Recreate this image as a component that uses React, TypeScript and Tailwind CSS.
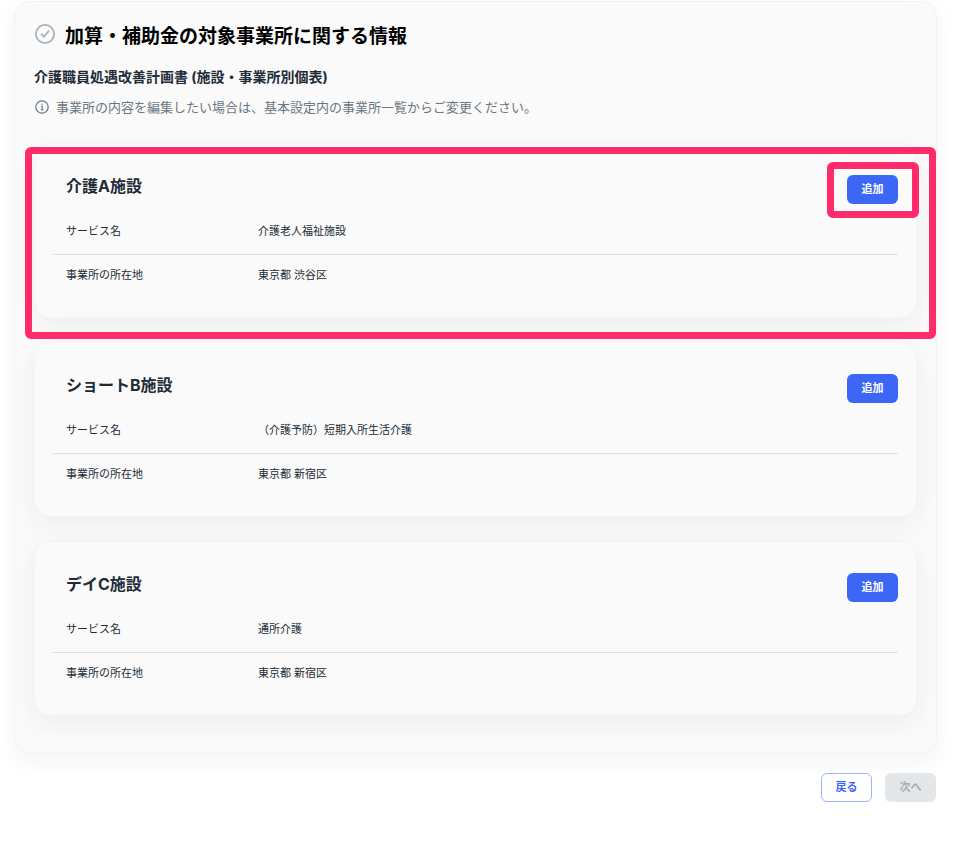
import React from "react";

type Facility = {
  name: string;
  service: string;
  address: string;
  highlighted?: boolean;
};

const facilities: Facility[] = [
  { name: "介護A施設", service: "介護老人福祉施設", address: "東京都 渋谷区", highlighted: true },
  { name: "ショートB施設", service: "（介護予防）短期入所生活介護", address: "東京都 新宿区" },
  { name: "デイC施設", service: "通所介護", address: "東京都 新宿区" },
];

function CheckCircle() {
  return (
    <svg className="mt-1 size-5 shrink-0" viewBox="0 0 20 20" fill="none" stroke="#a9b3bc" strokeWidth="1.8" aria-hidden="true">
      <circle cx="10" cy="10" r="9.1" />
      <path d="M6 9.6 9 12.6 14 6.7" />
    </svg>
  );
}

function InfoCircle() {
  return (
    <svg className="size-3.5 shrink-0" viewBox="0 0 14 14" fill="none" stroke="#6b7780" strokeWidth="1.2" aria-hidden="true">
      <circle cx="7" cy="7" r="6.2" />
      <path d="M6 6.2H7.2V9.8M5.8 9.8H8.6" strokeWidth="1.1" />
      <circle cx="7" cy="4.2" r="0.7" fill="#6b7780" stroke="none" />
    </svg>
  );
}

function FacilityCard({ facility }: { facility: Facility }) {
  return (
    <section className="relative rounded-2xl border border-[#f2f3f4] bg-[#fafafa] px-[18px] pt-[31px] pb-[21px] shadow-[0_8px_24px_rgba(30,45,75,0.06)]">
      <div className="flex h-[33px] items-start justify-between pl-[13px]">
        <h3 className="text-base leading-[22px] font-bold">{facility.name}</h3>
        <div className="relative">
          <button type="button" className="block h-[29px] w-[51px] rounded-md bg-[#3b66f6] text-[11px] font-bold text-white">
            追加
          </button>
          {facility.highlighted && (
            <div className="pointer-events-none absolute -top-[13px] -right-[21px] -bottom-3.5 -left-5 rounded-md border-[7px] border-[#ff2b6a]" />
          )}
        </div>
      </div>
      <table className="w-full table-fixed border-collapse text-left text-[11px] leading-5">
        <tbody>
          <tr className="h-[46px] border-b border-[#dee0e2]">
            <th scope="row" className="w-48 pl-[13px] font-normal">サービス名</th>
            <td className="pl-[13px]">{facility.service}</td>
          </tr>
          <tr className="h-[42px]">
            <th scope="row" className="pl-[13px] font-normal">事業所の所在地</th>
            <td className="pl-[13px]">{facility.address}</td>
          </tr>
        </tbody>
      </table>
      {facility.highlighted && (
        <div className="pointer-events-none absolute top-[3px] -right-5 -bottom-[22px] -left-2.5 z-10 rounded-md border-[7px] border-[#ff2b6a]" />
      )}
    </section>
  );
}

export default function App() {
  return (
    <main className="min-h-screen bg-white pt-px pr-[38px] pl-3.5 font-[Inter,'Noto_Sans_CJK_JP',sans-serif] text-[#212b36]">
      <section className="rounded-2xl border border-[#f2f3f4] bg-[#fafafa] px-[19px] pt-[18px] pb-[37px] shadow-[0_8px_24px_rgba(30,45,75,0.05)]">
        <div className="flex items-start gap-2.5 pl-px">
          <CheckCircle />
          <h1 className="text-[19px] leading-[34px] font-bold text-black">加算・補助金の対象事業所に関する情報</h1>
        </div>
        <h2 className="mt-[11px] text-sm leading-6 font-bold">介護職員処遇改善計画書 (施設・事業所別個表)</h2>
        <p className="mt-2 flex items-center gap-[7px] pl-px text-[13px] leading-5 text-[#6b7780]">
          <InfoCircle />
          事業所の内容を編集したい場合は、基本設定内の事業所一覧からご変更ください。
        </p>
        <div className="mt-[26px] flex flex-col gap-6">
          {facilities.map((facility) => (
            <FacilityCard key={facility.name} facility={facility} />
          ))}
        </div>
      </section>
      <div className="mt-[19px] flex justify-end gap-[13px] pr-px text-[11px] font-bold">
        <button type="button" className="h-[29px] w-[51px] rounded-md border border-[#9db2fb] bg-white text-[#3b66f6]">
          戻る
        </button>
        <button type="button" disabled className="h-[29px] w-[51px] rounded-md bg-[#e4e7ea] text-[#a4adb6]">
          次へ
        </button>
      </div>
    </main>
  );
}
